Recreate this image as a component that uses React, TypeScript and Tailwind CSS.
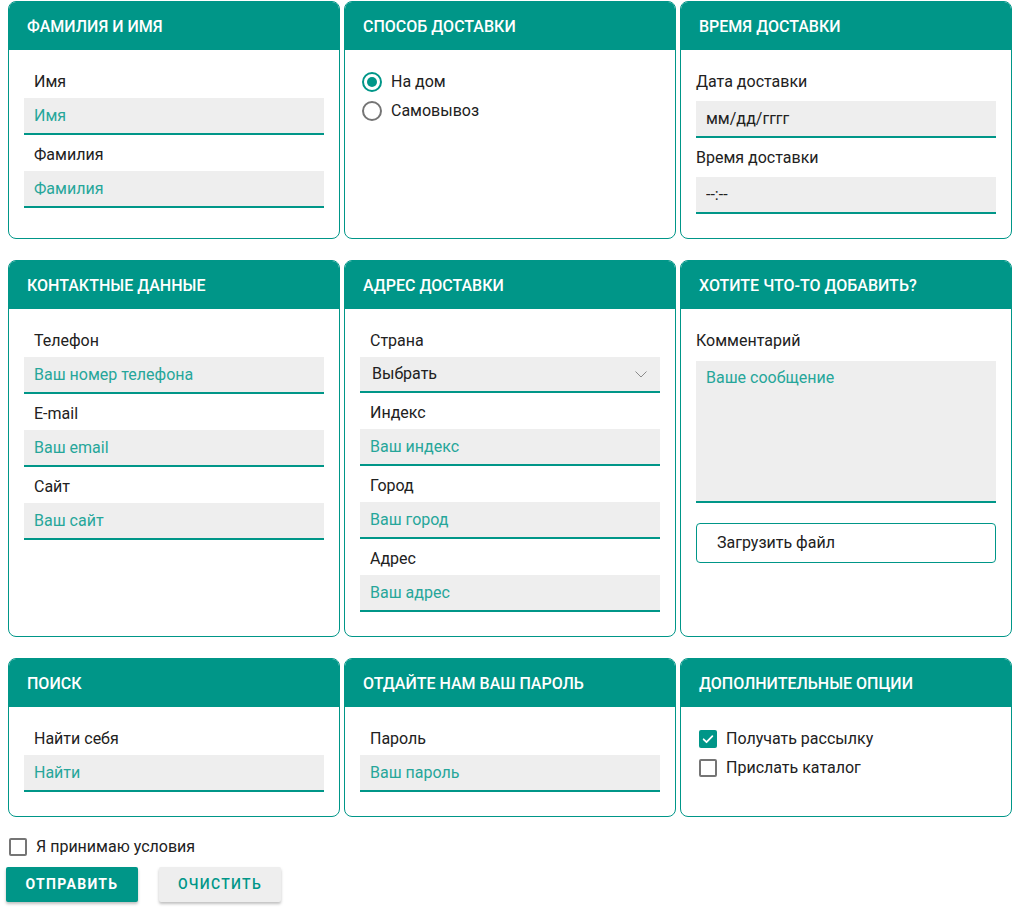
import React from 'react';

function Card(props: { title: string; children: React.ReactNode }) {
    return (
        <div className="flex flex-col overflow-hidden rounded-lg border border-[#009688] bg-white">
            <div className="flex h-[48px] items-center bg-[#009688] pl-[18px] pt-px text-[16px] font-medium text-white">
                {props.title}
            </div>
            <div className="flex-1 px-[15px] pt-[21px] pb-[24px]">{props.children}</div>
        </div>
    );
}

function Field(props: { label: string; placeholder?: string; value?: string; gap?: string; first?: boolean; flush?: boolean }) {
    return (
        <div className={props.first ? '' : 'mt-[9px]'}>
            <div
                className={
                    'text-[16px] leading-[22px] text-[#212121] ' +
                    (props.flush ? '' : 'pl-[10px] ') +
                    (props.gap ?? 'mb-[5px]')
                }
            >
                {props.label}
            </div>
            <input
                readOnly
                placeholder={props.placeholder}
                value={props.value}
                className="block h-[37px] w-full border-b-2 border-[#009688] bg-[#eeeeee] px-[10px] text-[16px] text-[#212121] outline-none placeholder:text-[#26a69a]"
            />
        </div>
    );
}

function Radio(props: { checked?: boolean; label: string }) {
    return (
        <div className="flex h-[22px] items-center">
            <span
                className={
                    'ml-[2px] flex h-[20px] w-[20px] items-center justify-center rounded-full border-2 ' +
                    (props.checked ? 'border-[#009688]' : 'border-[#757575]')
                }
            >
                {props.checked && <span className="h-[10px] w-[10px] rounded-full bg-[#009688]" />}
            </span>
            <span className="ml-[9px] text-[16px] text-[#212121]">{props.label}</span>
        </div>
    );
}

function Check(props: { checked?: boolean; label: string }) {
    return (
        <div className="flex h-[22px] items-center">
            <span
                className={
                    'ml-[3px] flex h-[18px] w-[18px] items-center justify-center rounded-[2px] ' +
                    (props.checked ? 'bg-[#009688]' : 'border-2 border-[#757575]')
                }
            >
                {props.checked && (
                    <svg width="14" height="14" viewBox="0 0 24 24" fill="none" stroke="white" strokeWidth="3" strokeLinecap="round" strokeLinejoin="round">
                        <polyline points="4.5 12.5 9.5 17.5 19.5 7" />
                    </svg>
                )}
            </span>
            <span className="ml-[9px] text-[16px] text-[#212121]">{props.label}</span>
        </div>
    );
}

export default function App() {
    return (
        <div className="min-h-screen bg-white pt-[1px] font-[Roboto,sans-serif]">
            <div className="grid grid-cols-3 gap-x-[4px] gap-y-[21px] pl-[8px] pr-[7px]">
                <Card title="ФАМИЛИЯ И ИМЯ">
                    <Field first label="Имя" placeholder="Имя" />
                    <Field label="Фамилия" placeholder="Фамилия" />
                </Card>
                <Card title="СПОСОБ ДОСТАВКИ">
                    <div className="flex flex-col gap-[7px]">
                        <Radio checked label="На дом" />
                        <Radio label="Самовывоз" />
                    </div>
                </Card>
                <Card title="ВРЕМЯ ДОСТАВКИ">
                    <Field first flush label="Дата доставки" value="мм/дд/гггг" gap="mb-[8px]" />
                    <Field flush label="Время доставки" value="--:--" gap="mb-[8px]" />
                </Card>

                <Card title="КОНТАКТНЫЕ ДАННЫЕ">
                    <Field first label="Телефон" placeholder="Ваш номер телефона" />
                    <Field label="E-mail" placeholder="Ваш email" />
                    <Field label="Сайт" placeholder="Ваш сайт" />
                </Card>
                <Card title="АДРЕС ДОСТАВКИ">
                    <div>
                        <div className="mb-[5px] pl-[10px] text-[16px] leading-[22px] text-[#212121]">Страна</div>
                        <div className="flex h-[36px] items-center justify-between border-b-2 border-[#009688] bg-[#eeeeee] pl-[12px] pr-[13px] text-[16px] text-[#212121]">
                            <span>Выбрать</span>
                            <svg width="12" height="7" viewBox="0 0 12 7" fill="none" stroke="#8a8a8a" strokeWidth="1">
                                <polyline points="0.5 0.5 6 6 11.5 0.5" />
                            </svg>
                        </div>
                    </div>
                    <Field label="Индекс" placeholder="Ваш индекс" />
                    <Field label="Город" placeholder="Ваш город" />
                    <Field label="Адрес" placeholder="Ваш адрес" />
                </Card>
                <Card title="ХОТИТЕ ЧТО-ТО ДОБАВИТЬ?">
                    <div className="mb-[9px] text-[16px] leading-[22px] text-[#212121]">Комментарий</div>
                    <textarea
                        readOnly
                        placeholder="Ваше сообщение"
                        className="block h-[142px] w-full resize-none border-b-2 border-[#009688] bg-[#eeeeee] px-[10px] py-[6px] text-[16px] leading-[22px] outline-none placeholder:text-[#26a69a]"
                    />
                    <button className="mt-[20px] flex h-[40px] w-full items-center rounded-[4px] border border-[#009688] bg-white pl-[20px] text-[16px] text-[#212121]">
                        Загрузить файл
                    </button>
                </Card>

                <Card title="ПОИСК">
                    <Field first label="Найти себя" placeholder="Найти" />
                </Card>
                <Card title="ОТДАЙТЕ НАМ ВАШ ПАРОЛЬ">
                    <Field first label="Пароль" placeholder="Ваш пароль" />
                </Card>
                <Card title="ДОПОЛНИТЕЛЬНЫЕ ОПЦИИ">
                    <div className="flex flex-col gap-[7px]">
                        <Check checked label="Получать рассылку" />
                        <Check label="Прислать каталог" />
                    </div>
                </Card>
            </div>

            <div className="px-[6px] pt-[19px]">
                <Check label="Я принимаю условия" />
                <div className="mt-[9px] flex gap-[21px]">
                    <button className="h-[35px] w-[132px] rounded-[2px] bg-[#009688] text-[14px] font-bold tracking-[1.3px] text-white shadow-[0_2px_3px_rgba(0,0,0,0.25)]">
                        ОТПРАВИТЬ
                    </button>
                    <button className="h-[35px] w-[122px] rounded-[2px] bg-[#eeeeee] text-[14px] font-medium tracking-[1.3px] text-[#009688] shadow-[0_2px_3px_rgba(0,0,0,0.25)]">
                        ОЧИСТИТЬ
                    </button>
                </div>
            </div>
        </div>
    );
}
